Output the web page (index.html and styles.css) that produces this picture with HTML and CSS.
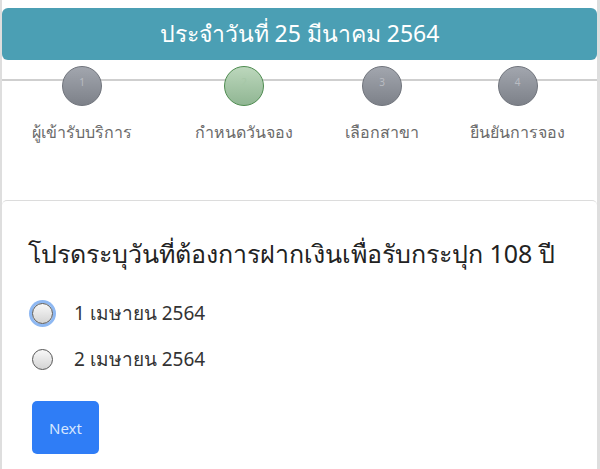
FILE: index.html
```html
<!DOCTYPE html>
<html lang="th">
<head>
<meta charset="utf-8">
<link rel="stylesheet" href="styles.css">
</head>
<body>
<div class="page">
  <div class="banner">ประจำวันที่ 25 มีนาคม 2564</div>
  <div class="steps">
    <div class="step">
      <div class="dot">1</div>
      <div class="label">ผู้เข้ารับบริการ</div>
    </div>
    <div class="step">
      <div class="dot active">2</div>
      <div class="label">กำหนดวันจอง</div>
    </div>
    <div class="step">
      <div class="dot">3</div>
      <div class="label">เลือกสาขา</div>
    </div>
    <div class="step">
      <div class="dot">4</div>
      <div class="label">ยืนยันการจอง</div>
    </div>
  </div>
  <div class="card">
    <h1 class="title">โปรดระบุวันที่ต้องการฝากเงินเพื่อรับกระปุก 108 ปี</h1>
    <label class="option"><span class="radio focus"></span><span>1 เมษายน 2564</span></label>
    <label class="option"><span class="radio"></span><span>2 เมษายน 2564</span></label>
    <button class="next">Next</button>
  </div>
</div>
</body>
</html>
```
FILE: styles.css
```css
html, body {
  margin: 0;
  padding: 0;
  background: #fff;
  font-family: "Noto Sans", "DejaVu Sans", sans-serif;
}
.page {
  width: 600px;
  height: 469px;
  box-sizing: border-box;
  border-left: 2px solid #dedede;
  border-right: 3px solid #dedede;
  overflow: hidden;
  padding-top: 8px;
}
.banner {
  height: 52px;
  background: #4b9fb4;
  border-radius: 6px;
  color: #fff;
  font-size: 23px;
  display: flex;
  align-items: center;
  justify-content: center;
  box-shadow: 0 1px 1px rgba(0,0,0,0.08);
}
.steps {
  display: grid;
  grid-template-columns: 160px 164px 112px 159px;
  height: 140px;
  background: linear-gradient(#fff 0, #fff 19px, #cfcfcf 19px, #cfcfcf 21px, #fff 21px);
  padding-top: 6px;
  box-sizing: border-box;
}
.step {
  display: flex;
  flex-direction: column;
  align-items: center;
}
.dot {
  width: 40px;
  height: 40px;
  border-radius: 50%;
  border: 1.5px solid #6f737b;
  background: linear-gradient(#a2a6ae, #7d8189);
  color: #b9bcc2;
  font-size: 10px;
  display: flex;
  align-items: center;
  justify-content: center;
  padding-bottom: 9px;
  box-sizing: border-box;
}
.dot.active {
  border-color: #4d8b4f;
  background: linear-gradient(#bcd7bc, #90b693);
  color: #a6c7a7;
}
.label {
  margin-top: 14px;
  font-size: 16px;
  color: #6a6a6a;
}
.card {
  border-top: 1px solid #dcdcdc;
  border-radius: 5px 5px 0 0;
  padding: 33px 0 0 28px;
}
.title {
  margin: 0 0 16px -2px;
  font-weight: normal;
  font-size: 25px;
  color: #222;
}
.option {
  display: flex;
  align-items: center;
  gap: 21px;
  font-size: 19px;
  color: #333;
  height: 46px;
}
.radio {
  width: 21px;
  height: 21px;
  box-sizing: border-box;
  border: 1px solid #555;
  border-radius: 50%;
  background: linear-gradient(#f8f8f8, #d4d4d4);
  margin-left: 2px;
}
.radio.focus {
  box-shadow: 0 0 0 3px #8eb8f2;
}
.next {
  margin-top: 19px;
  margin-left: 2px;
  width: 67px;
  height: 53px;
  border: none;
  border-radius: 5px;
  background: #2f7df6;
  color: #d6e6ff;
  font-family: "Noto Sans", sans-serif;
  font-size: 15px;
}
```
